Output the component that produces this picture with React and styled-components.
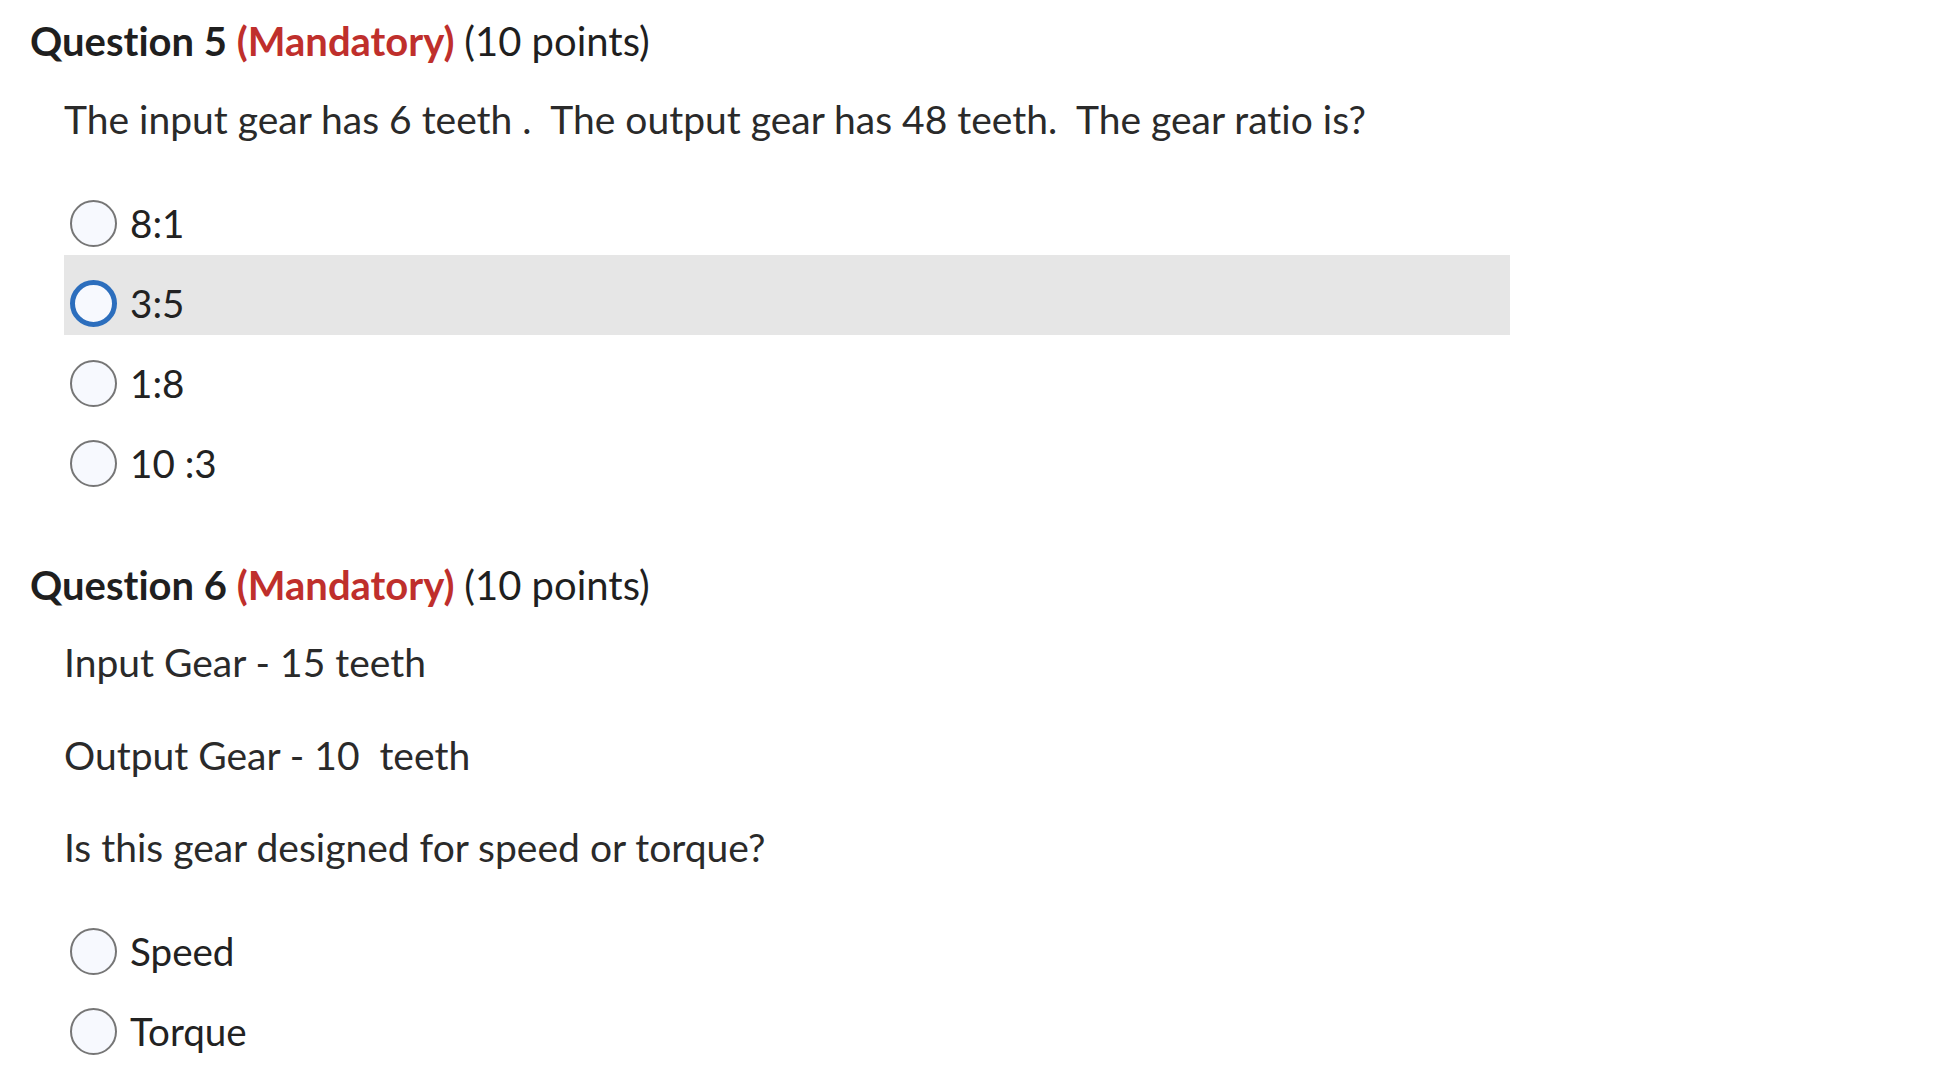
import React from "react";
import styled, { createGlobalStyle } from "styled-components";

const Global = createGlobalStyle`
  html, body { margin: 0; padding: 0; background: #ffffff; }
  body {
    font-family: Lato, "Noto Sans", "Liberation Sans", sans-serif;
    color: #222222;
    font-variant-ligatures: none;
    font-feature-settings: "liga" 0, "clig" 0;
  }
`;

const Page = styled.main`
  padding: 16px 0 0 30px;
  display: flex;
  flex-direction: column;
`;

const Question = styled.section`
  display: flex;
  flex-direction: column;
  margin-top: ${(p) => p.$top || 0}px;
`;

const Header = styled.h2`
  margin: 0;
  font-size: 40px;
  line-height: 50px;
  font-weight: 700;
  color: #1f1f1f;
`;

const Mandatory = styled.span`
  color: #bf2f2c;
  font-weight: 700;
`;

const Points = styled.span`
  font-weight: 400;
  color: #1f1f1f;
`;

const Body = styled.div`
  padding-left: 34px;
  display: flex;
  flex-direction: column;
`;

const Text = styled.p`
  margin: ${(p) => p.$top || 0}px 0 0 0;
  font-size: 39px;
  line-height: 50px;
  color: #2a2a2a;
  white-space: pre;
`;

const Options = styled.div`
  margin-top: 31px;
  width: 1446px;
  display: flex;
  flex-direction: column;
`;

const Option = styled.label`
  height: 80px;
  box-sizing: border-box;
  padding: 25px 0 8px 6px;
  display: flex;
  align-items: center;
  gap: 13px;
  background: ${(p) => (p.$hover ? "#e6e6e6" : "transparent")};
`;

const Radio = styled.span`
  width: 47px;
  height: 47px;
  box-sizing: border-box;
  border-radius: 50%;
  background: #f7f9fe;
  border: ${(p) => (p.$focus ? "5px solid #2c6ebd" : "2.5px solid #767676")};
  flex: none;
`;

const OptionText = styled.span`
  font-size: 38.6px;
  line-height: 47px;
  color: #222222;
  white-space: pre;
`;

const q5 = ["8:1", "3:5", "1:8", "10 :3"];
const q6 = ["Speed", "Torque"];

export default function App() {
  return (
    <>
      <Global />
      <Page>
        <Question>
          <Header>
            Question 5 <Mandatory>(Mandatory)</Mandatory> <Points>(10 points)</Points>
          </Header>
          <Body>
            <Text $top={28}>{"The input gear has 6 teeth .  The output gear has 48 teeth.  The gear ratio is?"}</Text>
            <Options>
              {q5.map((o, i) => (
                <Option key={o} $hover={i === 1}>
                  <Radio $focus={i === 1} />
                  <OptionText>{o}</OptionText>
                </Option>
              ))}
            </Options>
          </Body>
        </Question>
        <Question $top={65}>
          <Header>
            Question 6 <Mandatory>(Mandatory)</Mandatory> <Points>(10 points)</Points>
          </Header>
          <Body>
            <Text $top={27}>Input Gear - 15 teeth</Text>
            <Text $top={43}>{"Output Gear - 10  teeth"}</Text>
            <Text $top={42}>Is this gear designed for speed or torque?</Text>
            <Options>
              {q6.map((o) => (
                <Option key={o}>
                  <Radio />
                  <OptionText>{o}</OptionText>
                </Option>
              ))}
            </Options>
          </Body>
        </Question>
      </Page>
    </>
  );
}
